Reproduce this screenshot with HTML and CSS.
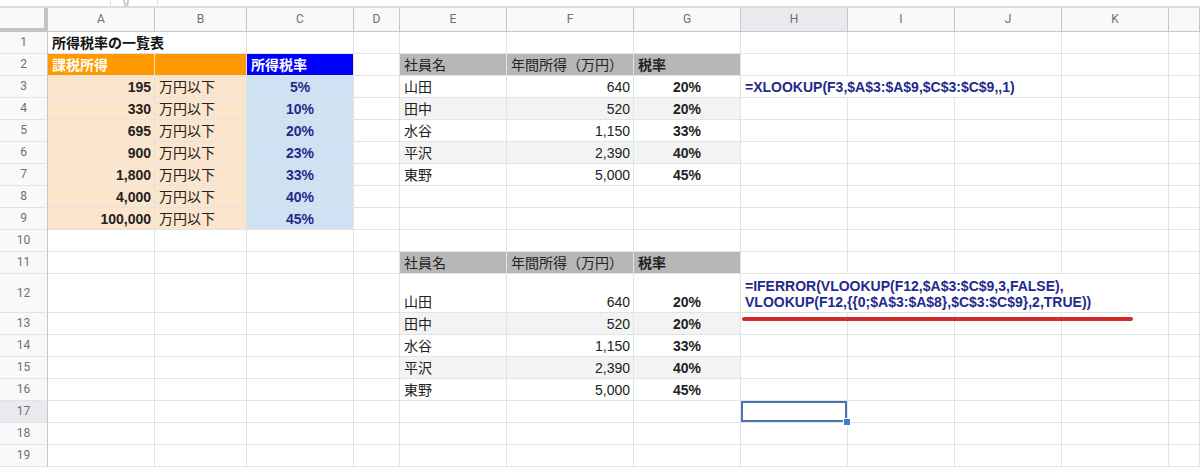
FILE: index.html
```html
<!DOCTYPE html>
<html lang="ja">
<head>
  <meta charset="UTF-8">
  <title>所得税率の一覧表</title>
  <link rel="stylesheet" href="styles.css">
</head>
<body>
  <div class="toolbar"><div class="tab">g</div></div>

  <div class="sheet">
    <!-- 列見出し -->
    <div class="corner"></div>
    <div class="hd">A</div><div class="hd">B</div><div class="hd">C</div><div class="hd">D</div>
    <div class="hd">E</div><div class="hd">F</div><div class="hd">G</div><div class="hd sel">H</div>
    <div class="hd">I</div><div class="hd">J</div><div class="hd">K</div><div class="hd"></div>

    <!-- 1 -->
    <div class="rh">1</div>
    <div class="title span2">所得税率の一覧表</div>
    <div></div><div></div><div></div><div></div><div></div>
    <div></div><div></div><div></div><div></div><div></div>

    <!-- 2 -->
    <div class="rh">2</div>
    <div class="orange b">課税所得</div><div class="orange"></div><div class="blue b">所得税率</div>
    <div></div>
    <div class="gray">社員名</div><div class="gray">年間所得（万円）</div><div class="gray b">税率</div>
    <div></div><div></div><div></div><div></div><div></div>

    <!-- 3 -->
    <div class="rh">3</div>
    <div class="peach num b">195</div><div class="peach">万円以下</div><div class="sky pct">5%</div>
    <div></div>
    <div>山田</div><div class="num">640</div><div class="rate">20%</div>
    <div class="formula span3">=XLOOKUP(F3,$A$3:$A$9,$C$3:$C$9,,1)</div><div></div><div></div>

    <!-- 4 -->
    <div class="rh">4</div>
    <div class="peach num b">330</div><div class="peach">万円以下</div><div class="sky pct">10%</div>
    <div></div>
    <div class="stripe">田中</div><div class="stripe num">520</div><div class="stripe rate">20%</div>
    <div></div><div></div><div></div><div></div><div></div>

    <!-- 5 -->
    <div class="rh">5</div>
    <div class="peach num b">695</div><div class="peach">万円以下</div><div class="sky pct">20%</div>
    <div></div>
    <div>水谷</div><div class="num">1,150</div><div class="rate">33%</div>
    <div></div><div></div><div></div><div></div><div></div>

    <!-- 6 -->
    <div class="rh">6</div>
    <div class="peach num b">900</div><div class="peach">万円以下</div><div class="sky pct">23%</div>
    <div></div>
    <div class="stripe">平沢</div><div class="stripe num">2,390</div><div class="stripe rate">40%</div>
    <div></div><div></div><div></div><div></div><div></div>

    <!-- 7 -->
    <div class="rh">7</div>
    <div class="peach num b">1,800</div><div class="peach">万円以下</div><div class="sky pct">33%</div>
    <div></div>
    <div>東野</div><div class="num">5,000</div><div class="rate">45%</div>
    <div></div><div></div><div></div><div></div><div></div>

    <!-- 8 -->
    <div class="rh">8</div>
    <div class="peach num b">4,000</div><div class="peach">万円以下</div><div class="sky pct">40%</div>
    <div></div><div></div><div></div><div></div><div></div><div></div><div></div><div></div><div></div>

    <!-- 9 -->
    <div class="rh">9</div>
    <div class="peach num b">100,000</div><div class="peach">万円以下</div><div class="sky pct">45%</div>
    <div></div><div></div><div></div><div></div><div></div><div></div><div></div><div></div><div></div>

    <!-- 10 -->
    <div class="rh">10</div>
    <div></div><div></div><div></div><div></div><div></div><div></div>
    <div></div><div></div><div></div><div></div><div></div><div></div>

    <!-- 11 -->
    <div class="rh">11</div>
    <div></div><div></div><div></div><div></div>
    <div class="gray">社員名</div><div class="gray">年間所得（万円）</div><div class="gray b">税率</div>
    <div></div><div></div><div></div><div></div><div></div>

    <!-- 12 -->
    <div class="rh">12</div>
    <div></div><div></div><div></div><div></div>
    <div>山田</div><div class="num">640</div><div class="rate">20%</div>
    <div class="formula span4">=IFERROR(VLOOKUP(F12,$A$3:$C$9,3,FALSE),<br>VLOOKUP(F12,{{0;$A$3:$A$8},$C$3:$C$9},2,TRUE))</div>
    <div></div>

    <!-- 13 -->
    <div class="rh">13</div>
    <div></div><div></div><div></div><div></div>
    <div class="stripe">田中</div><div class="stripe num">520</div><div class="stripe rate">20%</div>
    <div></div><div></div><div></div><div></div><div></div>

    <!-- 14 -->
    <div class="rh">14</div>
    <div></div><div></div><div></div><div></div>
    <div>水谷</div><div class="num">1,150</div><div class="rate">33%</div>
    <div></div><div></div><div></div><div></div><div></div>

    <!-- 15 -->
    <div class="rh">15</div>
    <div></div><div></div><div></div><div></div>
    <div class="stripe">平沢</div><div class="stripe num">2,390</div><div class="stripe rate">40%</div>
    <div></div><div></div><div></div><div></div><div></div>

    <!-- 16 -->
    <div class="rh">16</div>
    <div></div><div></div><div></div><div></div>
    <div>東野</div><div class="num">5,000</div><div class="rate">45%</div>
    <div></div><div></div><div></div><div></div><div></div>

    <!-- 17 -->
    <div class="rh sel">17</div>
    <div></div><div></div><div></div><div></div><div></div><div></div><div></div>
    <div class="active"></div><div></div><div></div><div></div><div></div>

    <!-- 18 -->
    <div class="rh">18</div>
    <div></div><div></div><div></div><div></div><div></div><div></div>
    <div></div><div></div><div></div><div></div><div></div><div></div>

    <!-- 19 -->
    <div class="rh">19</div>
    <div></div><div></div><div></div><div></div><div></div><div></div>
    <div></div><div></div><div></div><div></div><div></div><div></div>

    <!-- 数式の下の赤線 -->
    <span class="mark"></span>
  </div>
</body>
</html>
```

FILE: styles.css
```css
body {
  margin: 0;
  background: #fff;
  font-family: "Liberation Sans", "Noto Sans CJK JP", sans-serif;
  font-size: 14px;
  color: #222;
  overflow: hidden;
}

/* 上端に少しだけ見えるツールバー */
.toolbar {
  height: 6px;
  border-bottom: 2px solid #dcdcdc;
}

.tab {
  margin-left: 110px;
  width: 34px;
  height: 6px;
  padding-left: 12px;
  border-left: 1px solid #e0e0e0;
  border-right: 1px solid #e0e0e0;
  overflow: hidden;
  font-size: 11px;
  line-height: 0;
  color: #aaa;
}

/* シート本体 */
.sheet {
  position: relative;
  display: grid;
  grid-template-columns: 48px 107px 92px 107px 46px 107px 127px repeat(5, 107px) 1fr;
  grid-template-rows: 24px repeat(11, 22px) 39px repeat(7, 22px);
}

.sheet > div {
  box-sizing: border-box;
  min-width: 0;
  display: flex;
  align-items: flex-end;
  padding: 0 4px 1px;
  border-right: 1px solid #e2e3e3;
  border-bottom: 1px solid #e2e3e3;
  line-height: 17px;
  white-space: nowrap;
}

/* 見出し */
.sheet > .hd,
.sheet > .rh {
  align-items: center;
  justify-content: center;
  padding: 0;
  background: #f8f9fa;
  border-color: #c7c7c7;
  font-family: Roboto, sans-serif;
  font-size: 12px;
  color: #707070;
}

.sheet > .rh {
  border-bottom-color: #e2e3e3;
}

.sheet > .sel {
  background: #e8eaed;
}

.sheet > .corner {
  background: #f8f9fa;
  border-right: 4px solid #c4c4c4;
  border-bottom: 4px solid #c4c4c4;
}

/* セル書式 */
.span2 { grid-column: span 2; }
.span3 { grid-column: span 3; }
.span4 { grid-column: span 4; }

.b { font-weight: bold; }

.title {
  font-weight: bold;
  color: #111;
}

.sheet > .orange {
  background: #ff9900;
  color: #fff;
}

.sheet > .blue {
  background: #0000ff;
  color: #fff;
}

.peach { background: #fce5cd; }

.sky { background: #cfe2f3; }

.gray { background: #b7b7b7; }

.stripe { background: #f3f3f3; }

.sheet > .num {
  justify-content: flex-end;
  padding-right: 3px;
}

.sheet > .pct {
  justify-content: center;
  font-weight: bold;
  color: #1f2a8c;
}

.sheet > .rate {
  justify-content: center;
  font-weight: bold;
}

.sheet > .formula {
  font-weight: bold;
  color: #1f2a8c;
  line-height: 16px;
  padding-bottom: 2px;
}

/* 選択中のセル */
.sheet > .active {
  position: relative;
  box-shadow: inset 0 0 0 2px #4676ad;
}

.active::after {
  content: "";
  position: absolute;
  right: -4px;
  bottom: -4px;
  width: 6px;
  height: 6px;
  background: #3b7bd6;
  border: 1px solid #fff;
}

.mark {
  position: absolute;
  left: 742px;
  top: 309px;
  width: 391px;
  height: 4px;
  border-radius: 2px;
  background: #d22b2b;
}
```
